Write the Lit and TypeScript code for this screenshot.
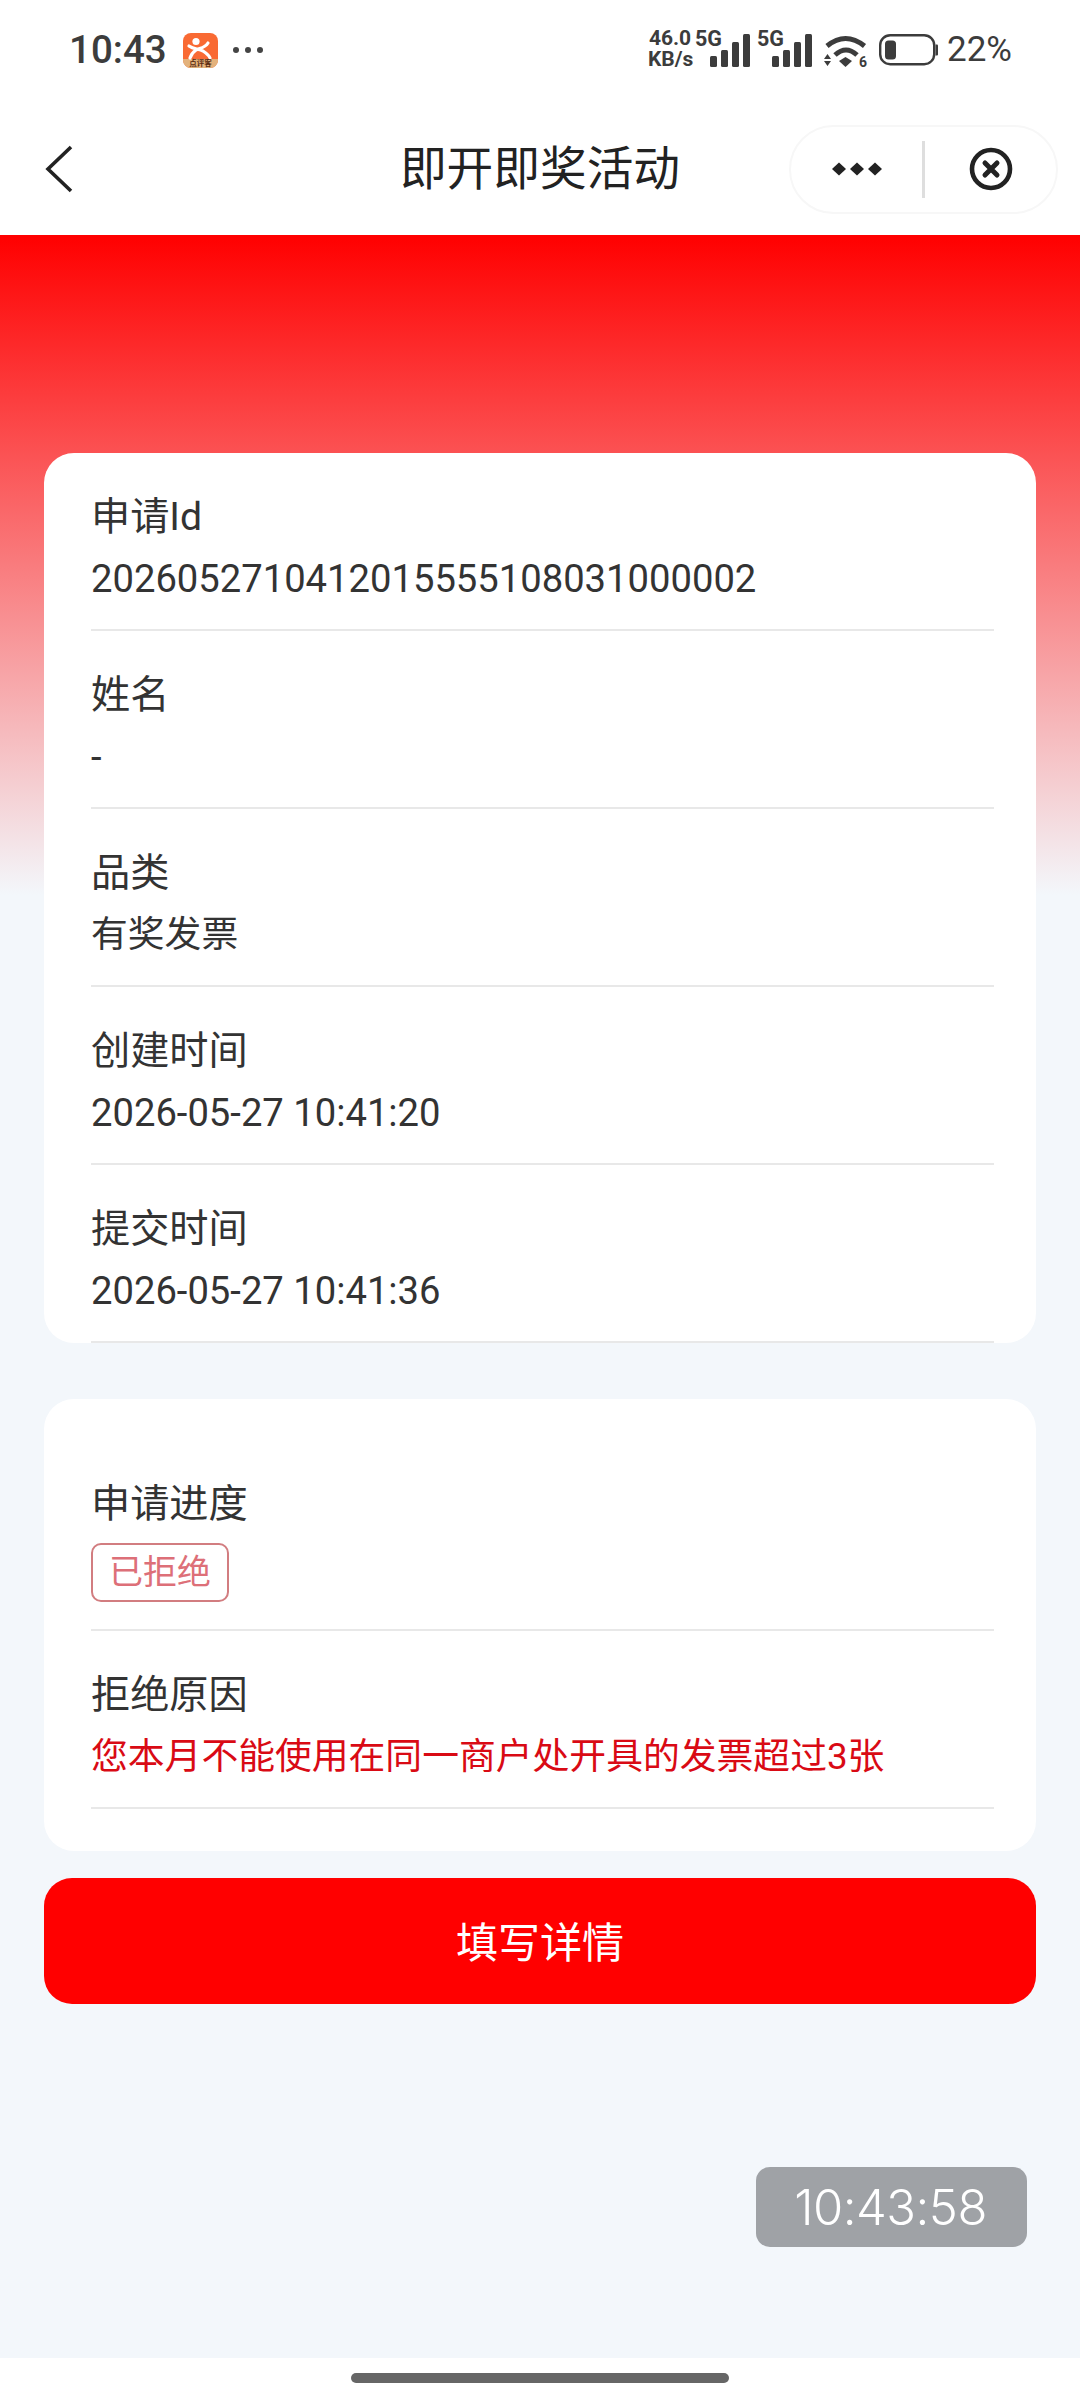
import { LitElement, html, css } from "lit";
import { customElement } from "lit/decorators.js";

const signal = (label: string) => html`
  <svg class="sim" width="56" height="36" viewBox="0 0 56 36">
    <text x="-1" y="15" class="g5">${label}</text>
    <rect x="14" y="25" width="7" height="11" rx="1.5"></rect>
    <rect x="25" y="19" width="7" height="17" rx="1.5"></rect>
    <rect x="36" y="11" width="7" height="25" rx="1.5"></rect>
    <rect x="47" y="3" width="7" height="33" rx="1.5"></rect>
  </svg>`;

@customElement("app-root")
export class AppRoot extends LitElement {
  static styles = css`
    :host {
      display: block;
      width: 1080px;
      height: 2400px;
      position: relative;
      overflow: hidden;
      background: #fff;
      color: #333;
      font-family: Roboto, "Noto Sans CJK SC", sans-serif;
    }
    .status {
      height: 86px;
      box-sizing: border-box;
      padding: 14px 68px 0 69px;
      display: flex;
      align-items: center;
      justify-content: space-between;
      color: #3c3c3c;
    }
    .status-left { display: flex; align-items: center; }
    .time { font-size: 38.5px; font-weight: 500; line-height: 44px; }
    .app { margin-left: 16px; display: block; }
    .more { margin-left: 15px; display: block; }
    .status-right { display: flex; align-items: center; }
    .speed {
      font-size: 21px;
      font-weight: 700;
      line-height: 21px;
      text-align: center;
      width: 44px;
      margin-right: 4px;
      margin-top: -2px;
    }
    .sim { display: block; fill: #3c3c3c; margin-top: -2px; margin-right: 6px; overflow: visible; }
    .g5 { font: 700 21.5px Roboto, sans-serif; }
    .wifi { display: block; margin: 0 10px 0 4px; overflow: visible; }
    .wifi-six { font: 700 14px Roboto, sans-serif; fill: #3c3c3c; }
    .pct { font-size: 35px; line-height: 40px; margin-left: 9px; }
    .nav {
      height: 149px;
      box-sizing: border-box;
      padding-top: 17px;
      display: grid;
      grid-template-columns: 1fr auto 1fr;
      align-items: center;
    }
    .back { display: block; margin-left: 44px; }
    .title { font-size: 46.7px; color: #222; line-height: 60px; }
    .capsule {
      justify-self: end;
      margin-right: 22px;
      width: 269px;
      height: 89px;
      box-sizing: border-box;
      border: 2px solid #f7f7f7;
      border-radius: 45px;
      display: flex;
      align-items: center;
    }
    .half { flex: 1; display: flex; align-items: center; justify-content: center; }
    .sep { width: 3px; height: 57px; background: #dedede; }
    .main {
      height: 2123px;
      box-sizing: border-box;
      padding: 218px 44px 0;
      background: linear-gradient(#ff0000 0, #f3f7fb 660px, #f3f7fb 100%);
    }
    .card { background: #fff; border-radius: 30px; overflow: hidden; }
    .second { margin-top: 56px; padding: 41px 0 42px; }
    .row {
      height: 178px;
      box-sizing: border-box;
      margin: 0 42px 0 47px;
      padding-top: 33px;
      border-bottom: 2px solid #e8e8e8;
    }
    .row.tall { height: 191px; }
    .label { font-size: 39.2px; line-height: 62px; color: #333; }
    .value { font-size: 36.8px; line-height: 64px; margin-top: -1px; color: #333; }
    .value.num { font-size: 38.2px; }
    .value.err { color: #d90a14; }
    .badge {
      display: inline-block;
      margin-top: 8px;
      height: 59px;
      box-sizing: border-box;
      padding: 0 16px;
      border: 2px solid #d27d80;
      border-radius: 10px;
      font-size: 34px;
      line-height: 54px;
      color: #dd6f78;
    }
    .btn {
      margin-top: 27px;
      height: 126px;
      box-sizing: border-box;
      padding-bottom: 4px;
      border-radius: 28px;
      background: #ff0000;
      color: #fff;
      font-size: 42px;
      display: flex;
      align-items: center;
      justify-content: center;
    }
    .clock {
      position: absolute;
      left: 756px;
      top: 2167px;
      width: 271px;
      height: 80px;
      box-sizing: border-box;
      padding-right: 2px;
      border-radius: 14px;
      background: #9fa2a6;
      color: #fff;
      font-family: Inter, sans-serif;
      font-size: 49px;
      font-weight: 300;
      letter-spacing: -0.5px;
      display: flex;
      align-items: center;
      justify-content: center;
    }
    .home {
      height: 42px;
      background: #fff;
      display: flex;
      justify-content: center;
      padding-top: 15px;
      box-sizing: border-box;
    }
    .home i { display: block; width: 378px; height: 10px; border-radius: 5px; background: #666; }
  `;

  render() {
    const rows: [string, string, boolean][] = [
      ["申请Id", "2026052710412015555108031000002", true],
      ["姓名", "-", true],
      ["品类", "有奖发票", false],
      ["创建时间", "2026-05-27 10:41:20", true],
      ["提交时间", "2026-05-27 10:41:36", true],
    ];
    return html`
      <div class="status">
        <div class="status-left">
          <span class="time">10:43</span>
          <svg class="app" width="35" height="35" viewBox="0 0 35 35">
            <rect width="35" height="35" rx="8" fill="#f96a33"></rect>
            <path d="M0 26H35V27A8 8 0 0 1 27 35H8A8 8 0 0 1 0 27Z" fill="#e3b27c"></path>
            <circle cx="13" cy="8.5" r="3.6" fill="#fff"></circle>
            <path d="M25 10C22 15 17 15 13 17C10 19 8 22 7 25M6 13C10 16 15 16 20 18C23 20 26 22 27 25" fill="none" stroke="#fff" stroke-width="3.2" stroke-linecap="round"></path>
            <text x="17.5" y="33" text-anchor="middle" font-size="7.5" font-weight="700" fill="#5a2a10" font-family="Noto Sans CJK SC, sans-serif">点评客</text>
          </svg>
          <svg class="more" width="30" height="8" viewBox="0 0 30 8" fill="#444">
            <circle cx="3" cy="4" r="3"></circle><circle cx="15" cy="4" r="3"></circle><circle cx="27" cy="4" r="3"></circle>
          </svg>
        </div>
        <div class="status-right">
          <div class="speed">46.0<br />KB/s</div>
          ${signal("5G")}${signal("5G")}
          <svg class="wifi" width="45" height="33" viewBox="0 0 45 33">
            <path d="M3 12Q21.5 -3 40.5 12" fill="none" stroke="#3c3c3c" stroke-width="5"></path>
            <path d="M11 21Q22 11 33 21" fill="none" stroke="#3c3c3c" stroke-width="5"></path>
            <path d="M15 27L21.5 23L28 27L21.5 33Z" fill="#3c3c3c"></path>
            <path d="M0 25L3.5 20L7 25ZM0 27H7L3.5 32Z" fill="#3c3c3c"></path>
            <text x="35" y="33" class="wifi-six">6</text>
          </svg>
          <svg width="59" height="32" viewBox="0 0 59 32" style="display:block">
            <rect x="1.2" y="1.2" width="54" height="29" rx="10" fill="none" stroke="#3c3c3c" stroke-width="2.4"></rect>
            <rect x="6" y="6.5" width="11" height="19" rx="3.5" fill="#3c3c3c"></rect>
            <path d="M56.5 10.5H58A1 1 0 0 1 59 11.5V20.5A1 1 0 0 1 58 21.5H56.5Z" fill="#3c3c3c"></path>
          </svg>
          <span class="pct">22%</span>
        </div>
      </div>

      <div class="nav">
        <svg class="back" width="30" height="50" viewBox="0 0 30 50">
          <path d="M27 3L4 25L27 47" fill="none" stroke="#222" stroke-width="3.6"></path>
        </svg>
        <div class="title">即开即奖活动</div>
        <div class="capsule">
          <div class="half">
            <svg width="50" height="16" viewBox="0 0 50 16" fill="#222">
              <path d="M7 1.5L14 8L7 14.5L0 8Z"></path>
              <path d="M25 1.5L32 8L25 14.5L18 8Z"></path>
              <path d="M43 1.5L50 8L43 14.5L36 8Z"></path>
            </svg>
          </div>
          <div class="sep"></div>
          <div class="half">
            <svg width="44" height="44" viewBox="0 0 44 44" fill="none" stroke="#222">
              <circle cx="22" cy="22" r="19" stroke-width="4.6"></circle>
              <path d="M16 16L28 28M28 16L16 28" stroke-width="5" stroke-linecap="round"></path>
            </svg>
          </div>
        </div>
      </div>

      <div class="main">
        <div class="card">
          ${rows.map(
            ([k, v, num]) => html`<div class="row"><div class="label">${k}</div><div class="value ${num ? "num" : ""}">${v}</div></div>`
          )}
        </div>
        <div class="card second">
          <div class="row tall">
            <div class="label">申请进度</div>
            <span class="badge">已拒绝</span>
          </div>
          <div class="row">
            <div class="label">拒绝原因</div>
            <div class="value err">您本月不能使用在同一商户处开具的发票超过3张</div>
          </div>
        </div>
        <div class="btn">填写详情</div>
      </div>
      <div class="home"><i></i></div>
      <div class="clock">10:43:58</div>
    `;
  }
}
